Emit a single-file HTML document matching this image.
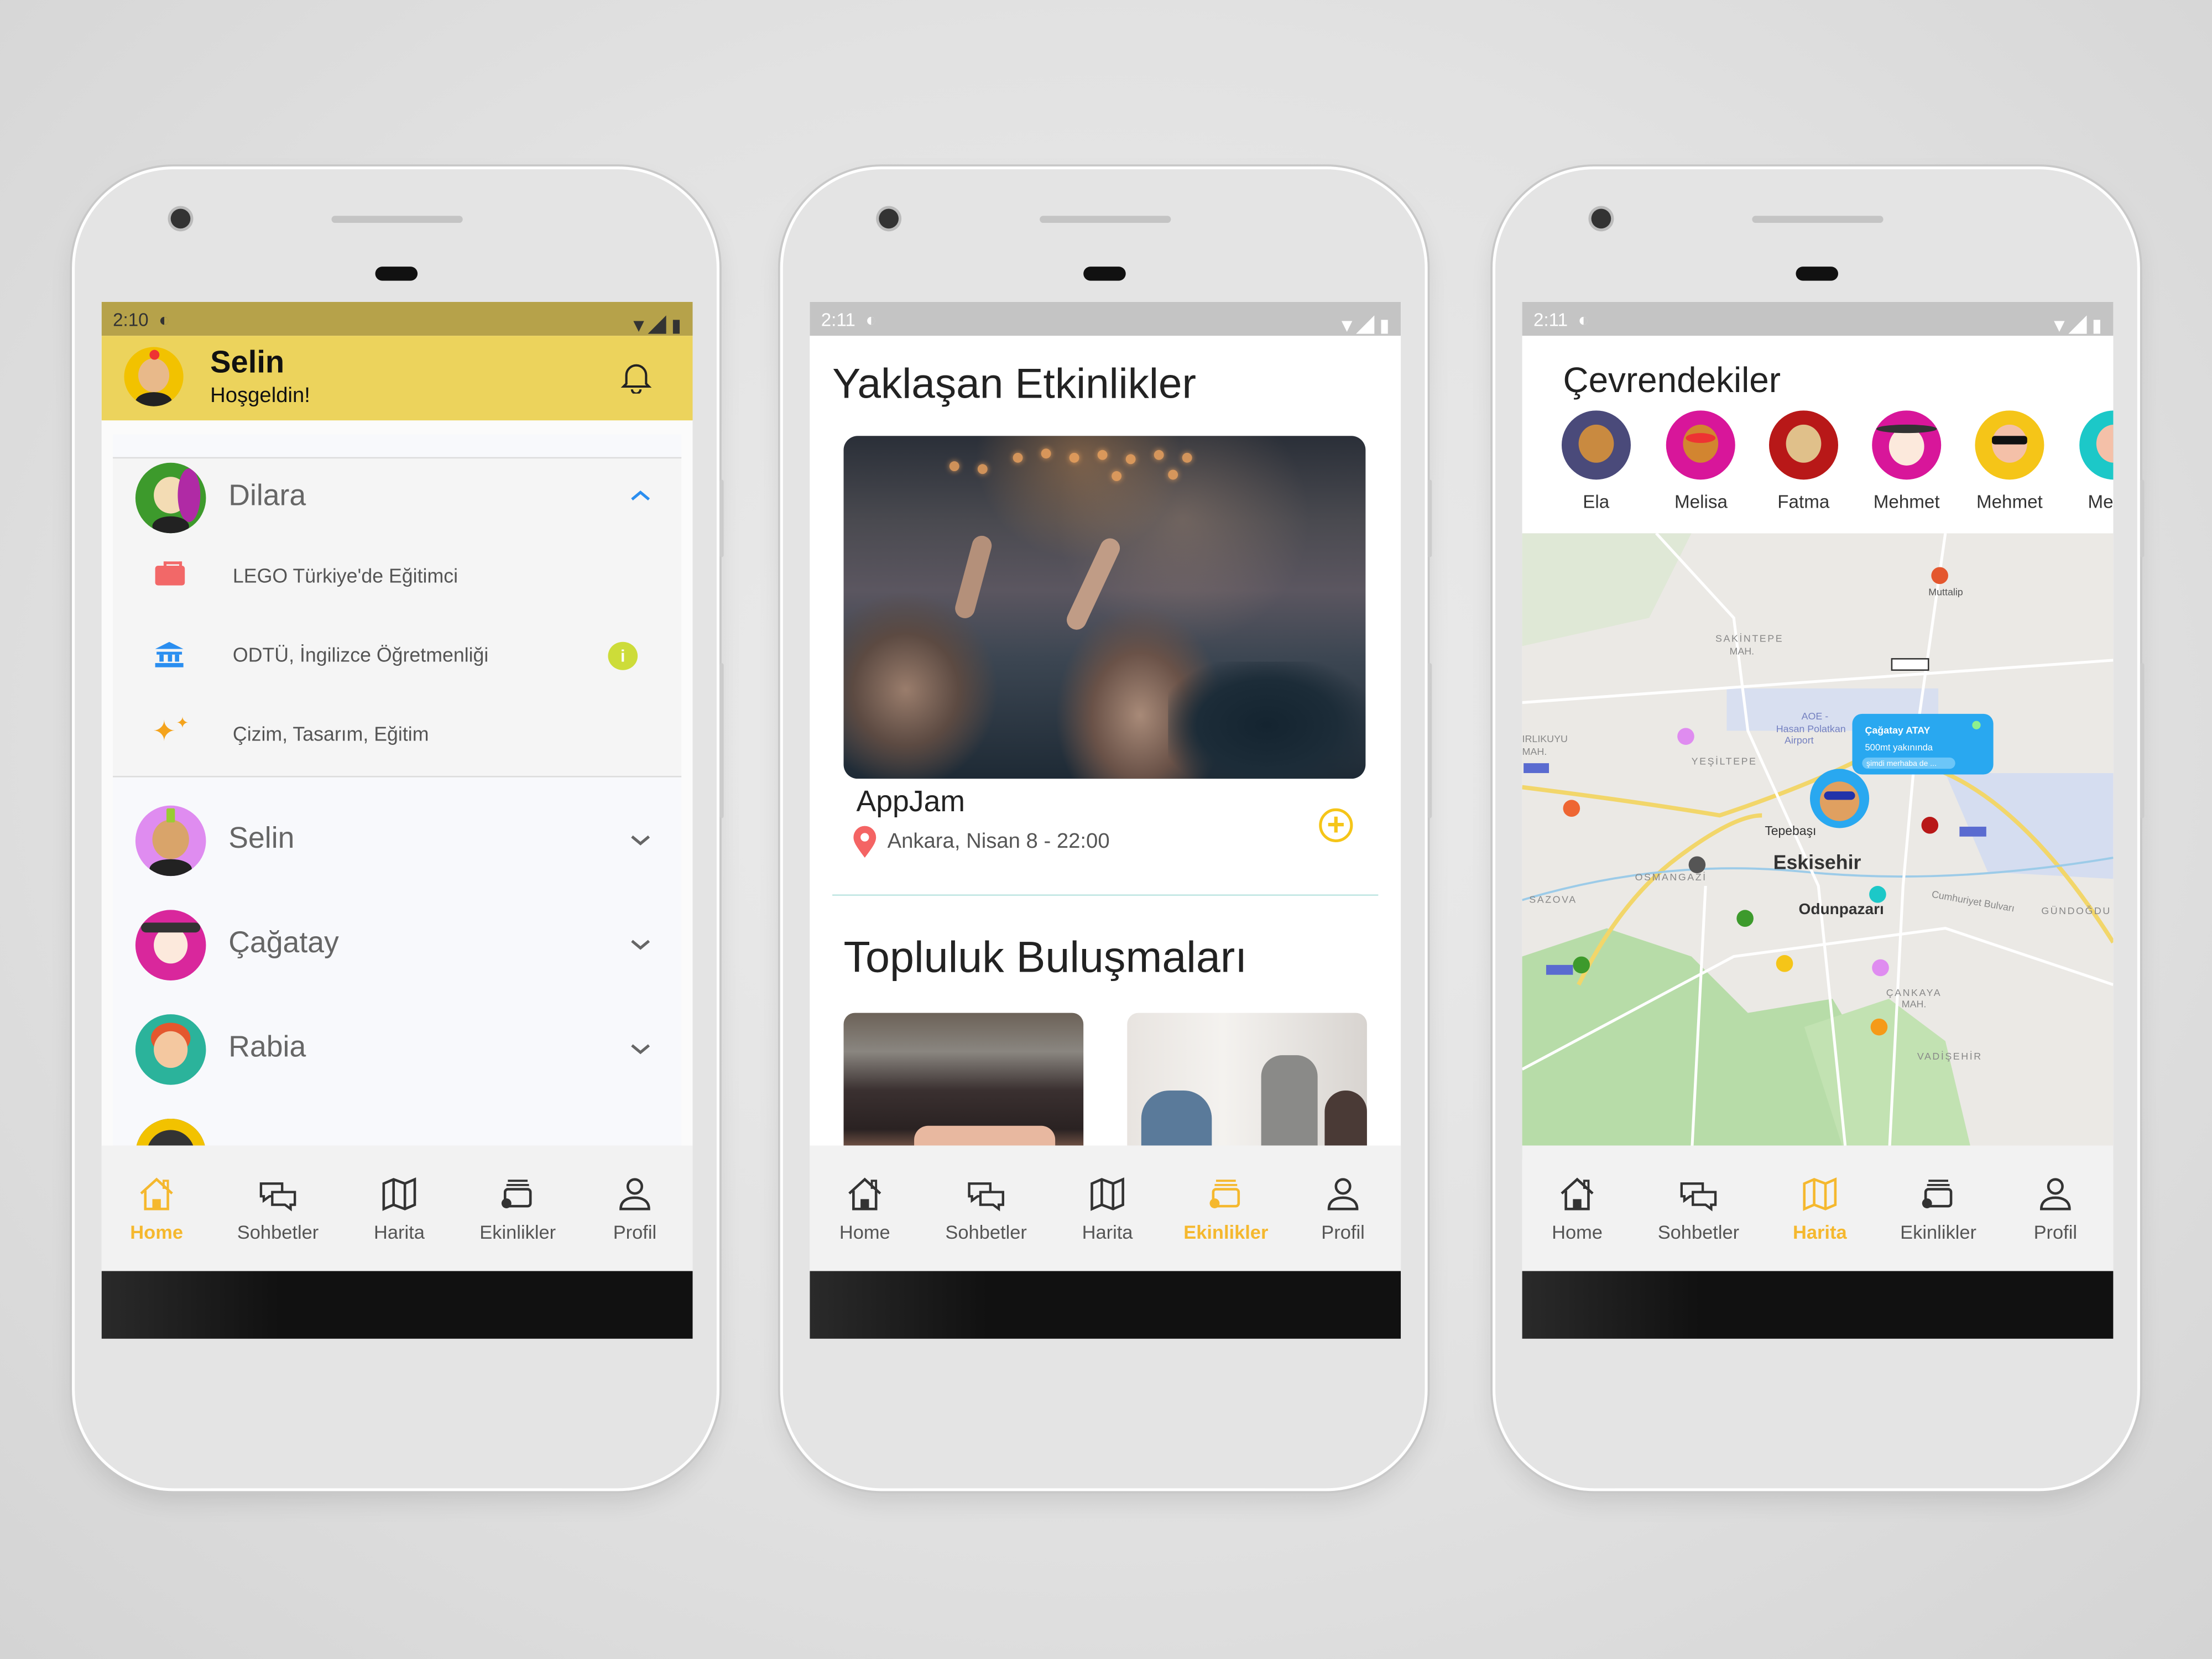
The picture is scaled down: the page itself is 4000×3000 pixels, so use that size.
<!DOCTYPE html>
<html><head><meta charset="utf-8">
<style>
html,body{margin:0;padding:0;width:4000px;height:3000px;overflow:hidden;}
body{background:radial-gradient(ellipse at 50% 45%,#ececec 0%,#e2e2e2 55%,#d4d4d4 100%);font-family:"Liberation Sans","Noto Sans CJK JP",sans-serif;}
#w{position:absolute;left:0;top:0;width:1568px;height:1176px;transform:scale(2.55102);transform-origin:0 0;}
.ph{position:absolute;top:120px;width:455px;height:935px;border-radius:70px;background:#e4e4e4;box-shadow:0 0 0 2px #fff,0 0 0 3.5px #c8c8c8,0 8px 18px rgba(0,0,0,.12);}
.ph .cam{position:absolute;left:68px;top:28px;width:14px;height:14px;border-radius:50%;background:#333;box-shadow:0 0 0 2px #bbb}
.ph .spk{position:absolute;left:182px;top:33px;width:93px;height:5px;border-radius:3px;background:#c4c4c4}
.ph .ear{position:absolute;left:213px;top:69px;width:30px;height:10px;border-radius:5px;background:#111}
.ph .btn{position:absolute;right:-5px;top:220px;width:3px;height:55px;background:#ccc;border-radius:2px}
.ph .btn2{position:absolute;right:-5px;top:350px;width:3px;height:110px;background:#ccc;border-radius:2px}
.scr{position:absolute;left:19px;top:94px;width:419px;height:735px;overflow:hidden;background:#fff}
.sb{position:absolute;left:0;top:0;width:100%;height:24px;color:#fff;font-size:13px;}
.sb .t{position:absolute;left:8px;top:5px}
.sb .r{position:absolute;right:8px;top:6px}
.nav{position:absolute;left:0;top:607px;width:100%;height:80px;background:#f2f2f2}
.nav div{position:absolute;top:0;width:84px;text-align:center;font-size:13.5px;color:#555}
.nav svg{display:block;margin:12px auto 7px;}
.bk{position:absolute;left:0;top:687px;width:100%;height:48px;background:linear-gradient(90deg,#2a2a2a,#111 30%,#111)}
.av{position:absolute;border-radius:50%;overflow:hidden}
.av i{position:absolute;border-radius:50%;background:#e8b98a}
.txt{position:absolute;white-space:nowrap}
.bo{position:absolute;width:7px;height:7px;border-radius:50%;background:#f5a860;opacity:.8;box-shadow:0 0 4px #f5a860}
</style></head><body><div id="w">

<!-- PHONE 1 -->
<div class="ph" style="left:53px">
<div class="cam"></div><div class="spk"></div><div class="ear"></div><div class="btn"></div><div class="btn2"></div>
<div class="scr" style="background:#fbfbfb">
 <div class="sb" style="background:#b6a24a;color:#333"><span class="t">2:10 &nbsp;◐</span><span class="r" style="color:#333">▼◢ ▮</span></div>
 <div style="position:absolute;top:24px;left:0;width:100%;height:60px;background:#ecd35c"></div>
 <div class="av" style="left:16px;top:32px;width:42px;height:42px;background:#f2c200"><i style="left:10px;top:8px;width:22px;height:24px"></i><i style="left:18px;top:2px;width:7px;height:7px;background:#e33"></i><i style="left:8px;top:32px;width:26px;height:14px;background:#222"></i></div>
 <div class="txt" style="left:77px;top:30px;font-size:22px;font-weight:bold;color:#111">Selin</div>
 <div class="txt" style="left:77px;top:58px;font-size:15px;color:#111">Hoşgeldin!</div>
 <svg style="position:absolute;left:368px;top:41px" width="22" height="24" viewBox="0 0 22 24"><path d="M4 17V11a7 7 0 0 1 14 0v6l2 2H2z M8 21a3 3 0 0 0 6 0" fill="none" stroke="#222" stroke-width="1.6"/></svg>
 <div style="position:absolute;left:8px;top:94px;width:403px;height:504px;background:#f8f9fc"></div>
 <div style="position:absolute;left:8px;top:110px;width:403px;height:225px;background:#f5f5f5;border-top:1px solid #ddd;border-bottom:1px solid #ddd"></div>
 <div class="av" style="left:24px;top:114px;width:50px;height:50px;background:#3d9a2c"><i style="left:13px;top:10px;width:24px;height:26px;background:#f3dcb4"></i><i style="left:30px;top:4px;width:16px;height:38px;background:#b02aa5"></i><i style="left:12px;top:38px;width:26px;height:14px;background:#222"></i></div>
 <div class="txt" style="left:90px;top:126px;font-size:21px;color:#666">Dilara</div>
 <svg style="position:absolute;left:375px;top:133px" width="14" height="9"><path d="M1 7L7 2L13 7" fill="none" stroke="#2a8ef0" stroke-width="2"/></svg>
 <div style="position:absolute;left:38px;top:187px;width:21px;height:14px;background:#f26868;border-radius:2px"></div><div style="position:absolute;left:44px;top:184px;width:9px;height:4px;border:2px solid #f26868;border-bottom:none"></div>
 <div class="txt" style="left:93px;top:186px;font-size:14px;color:#555">LEGO Türkiye'de Eğitimci</div>
 <svg style="position:absolute;left:37px;top:240px" width="22" height="20"><path d="M1 6L11 1L21 6Z" fill="#2a8ef0"/><rect x="2" y="8" width="18" height="2" fill="#2a8ef0"/><rect x="4" y="10" width="3" height="5" fill="#2a8ef0"/><rect x="10" y="10" width="3" height="5" fill="#2a8ef0"/><rect x="15" y="10" width="3" height="5" fill="#2a8ef0"/><rect x="1" y="16" width="20" height="3" fill="#2a8ef0"/></svg>
 <div class="txt" style="left:93px;top:242px;font-size:14px;color:#555">ODTÜ, İngilizce Öğretmenliği</div>
 <div style="position:absolute;left:359px;top:241px;width:21px;height:20px;border-radius:50%;background:#cddc39;color:#fff;font-size:12px;font-weight:bold;text-align:center;line-height:20px">i</div>
 <div class="txt" style="left:36px;top:292px;font-size:20px;color:#f4a31c">✦<span style="font-size:11px;vertical-align:top">✦</span></div>
 <div class="txt" style="left:93px;top:298px;font-size:14px;color:#555">Çizim, Tasarım, Eğitim</div>
 <div class="av" style="left:24px;top:357px;width:50px;height:50px;background:#df8cf0"><i style="left:12px;top:10px;width:26px;height:28px;background:#d9a46a"></i><i style="left:22px;top:2px;width:6px;height:10px;background:#9c3;border-radius:1px"></i><i style="left:10px;top:38px;width:30px;height:14px;background:#222"></i></div>
 <div class="txt" style="left:90px;top:369px;font-size:21px;color:#666">Selin</div>
 <div class="av" style="left:24px;top:431px;width:50px;height:50px;background:#d9279c"><i style="left:13px;top:12px;width:24px;height:26px;background:#fce9dc"></i><i style="left:4px;top:9px;width:42px;height:7px;background:#333;border-radius:4px"></i></div>
 <div class="txt" style="left:90px;top:443px;font-size:21px;color:#666">Çağatay</div>
 <div class="av" style="left:24px;top:505px;width:50px;height:50px;background:#2bb39b"><i style="left:11px;top:6px;width:28px;height:22px;background:#e4572e"></i><i style="left:13px;top:12px;width:24px;height:26px;background:#f4c8a0"></i></div>
 <div class="txt" style="left:90px;top:517px;font-size:21px;color:#666">Rabia</div>
 <svg style="position:absolute;left:375px;top:377px" width="14" height="9"><path d="M1 2L7 7L13 2" fill="none" stroke="#666" stroke-width="2"/></svg>
 <svg style="position:absolute;left:375px;top:451px" width="14" height="9"><path d="M1 2L7 7L13 2" fill="none" stroke="#666" stroke-width="2"/></svg>
 <svg style="position:absolute;left:375px;top:525px" width="14" height="9"><path d="M1 2L7 7L13 2" fill="none" stroke="#666" stroke-width="2"/></svg>
 <div style="position:absolute;left:24px;top:579px;width:50px;height:20px;overflow:hidden"><div style="width:50px;height:50px;border-radius:50%;box-shadow:inset 0 0 0 8px #f2c200;background:#333"></div></div>
 <div style="position:absolute;left:0;top:598px;width:100%;height:10px;background:#f2f2f2"></div>
 <div class="nav" id="n1"></div>
 <div class="bk"></div>
</div></div>

<!-- PHONE 2 -->
<div class="ph" style="left:555px">
<div class="cam"></div><div class="spk"></div><div class="ear"></div><div class="btn"></div><div class="btn2"></div>
<div class="scr">
 <div class="sb" style="background:#c4c4c4"><span class="t">2:11 &nbsp;◐</span><span class="r">▼◢ ▮</span></div>
 <div class="txt" style="left:16px;top:42px;font-size:30px;color:#222">Yaklaşan Etkinlikler</div>
 <div style="position:absolute;left:24px;top:95px;width:370px;height:243px;border-radius:10px;overflow:hidden;background:linear-gradient(180deg,#2a2f38 0%,#4a4a50 25%,#5b5660 45%,#3c4652 65%,#1e2a35 100%)">
  <div style="position:absolute;left:0;top:0;width:100%;height:60%;background:radial-gradient(circle at 45% 10%,rgba(255,170,90,.35) 0,transparent 30%),radial-gradient(circle at 65% 40%,rgba(200,160,130,.3) 0,transparent 35%)"></div>
  <div class="bo" style="left:120px;top:12px"></div><div class="bo" style="left:140px;top:9px"></div><div class="bo" style="left:160px;top:12px"></div><div class="bo" style="left:180px;top:10px"></div><div class="bo" style="left:200px;top:13px"></div><div class="bo" style="left:220px;top:10px"></div><div class="bo" style="left:240px;top:12px"></div><div class="bo" style="left:75px;top:18px"></div><div class="bo" style="left:95px;top:20px"></div><div class="bo" style="left:190px;top:25px"></div><div class="bo" style="left:230px;top:24px"></div>
  <div style="position:absolute;left:0;top:110px;width:110px;height:140px;background:radial-gradient(ellipse at 40% 50%,#9a7d6c 0,#5c4a42 40%,transparent 70%)"></div>
  <div style="position:absolute;left:150px;top:120px;width:120px;height:130px;background:radial-gradient(ellipse at 50% 60%,#a88a78 0,#6a5248 40%,transparent 70%)"></div>
  <div style="position:absolute;left:85px;top:70px;width:14px;height:60px;background:#b4907a;border-radius:7px;transform:rotate(15deg)"></div>
  <div style="position:absolute;left:170px;top:70px;width:14px;height:70px;background:#c09c86;border-radius:7px;transform:rotate(25deg)"></div>
  <div style="position:absolute;left:230px;top:160px;width:140px;height:90px;background:radial-gradient(ellipse,#142430 0,#1c2c38 50%,transparent 80%)"></div>
 </div>
 <div class="txt" style="left:33px;top:343px;font-size:21px;color:#222">AppJam</div>
 <svg style="position:absolute;left:30px;top:371px" width="18" height="24"><path d="M9 23C3 15 1 12 1 8.5A8 8 0 0 1 17 8.5C17 12 15 15 9 23Z" fill="#f46464"/><circle cx="9" cy="8.5" r="3" fill="#fff"/></svg>
 <div class="txt" style="left:55px;top:374px;font-size:15px;color:#555">Ankara, Nisan 8 - 22:00</div>
 <div style="position:absolute;left:361px;top:359px;width:20px;height:20px;border:2.5px solid #f5c518;border-radius:50%;color:#f5c518;font-size:22px;line-height:19px;text-align:center;font-weight:bold">+</div>
 <div style="position:absolute;left:16px;top:420px;width:387px;height:1px;background:#bfe6e2"></div>
 <div class="txt" style="left:24px;top:447px;font-size:31px;color:#222">Topluluk Buluşmaları</div>
 <div style="position:absolute;left:24px;top:504px;width:170px;height:110px;border-radius:8px;overflow:hidden;background:linear-gradient(180deg,#6c6258 0%,#8a8680 25%,#3a3030 50%,#2a2222 75%,#c58a6e 100%)"><div style="position:absolute;left:50px;top:80px;width:100px;height:30px;background:#e8b8a0;border-radius:10px"></div></div>
 <div style="position:absolute;left:225px;top:504px;width:170px;height:110px;border-radius:8px;overflow:hidden;background:linear-gradient(90deg,#e8e4e0 0%,#f4f2ef 40%,#d8d4d0 100%)"><div style="position:absolute;left:10px;top:55px;width:50px;height:55px;background:#5a7a9a;border-radius:20px 20px 0 0"></div><div style="position:absolute;left:95px;top:30px;width:40px;height:80px;background:#8a8a88;border-radius:15px 15px 0 0"></div><div style="position:absolute;left:140px;top:55px;width:30px;height:55px;background:#4a3a36;border-radius:15px 15px 0 0"></div></div>
 <div style="position:absolute;left:0;top:598px;width:100%;height:10px;background:#f2f2f2"></div>
 <div class="nav" id="n2"></div>
 <div class="bk"></div>
</div></div>

<!-- PHONE 3 -->
<div class="ph" style="left:1060px">
<div class="cam"></div><div class="spk"></div><div class="ear"></div><div class="btn"></div><div class="btn2"></div>
<div class="scr">
 <div class="sb" style="background:#c4c4c4"><span class="t">2:11 &nbsp;◐</span><span class="r">▼◢ ▮</span></div>
 <div class="txt" style="left:29px;top:42px;font-size:25px;color:#222">Çevrendekiler</div>
 <div class="av" style="left:28px;top:77px;width:49px;height:49px;background:#4a4a7a"><i style="left:12px;top:10px;width:25px;height:27px;background:#c98a40"></i></div>
 <div class="av" style="left:102px;top:77px;width:49px;height:49px;background:#d8169a"><i style="left:12px;top:10px;width:25px;height:27px;background:#d28530"></i><i style="left:14px;top:16px;width:21px;height:7px;background:#e33"></i></div>
 <div class="av" style="left:175px;top:77px;width:49px;height:49px;background:#b81818"><i style="left:12px;top:10px;width:25px;height:27px;background:#e0c08a"></i></div>
 <div class="av" style="left:248px;top:77px;width:49px;height:49px;background:#d8169a"><i style="left:12px;top:12px;width:25px;height:27px;background:#fce9dc"></i><i style="left:3px;top:10px;width:43px;height:6px;background:#333"></i></div>
 <div class="av" style="left:321px;top:77px;width:49px;height:49px;background:#f5c518"><i style="left:12px;top:10px;width:25px;height:27px;background:#f4c0a8"></i><i style="left:12px;top:18px;width:25px;height:6px;background:#111;border-radius:2px"></i></div>
 <div class="av" style="left:395px;top:77px;width:49px;height:49px;background:#1cc8c8"><i style="left:12px;top:10px;width:25px;height:27px;background:#f4c0a8"></i></div>
 <div class="txt" style="left:43px;top:134px;font-size:13px;color:#333">Ela</div>
 <div class="txt" style="left:108px;top:134px;font-size:13px;color:#333">Melisa</div>
 <div class="txt" style="left:181px;top:134px;font-size:13px;color:#333">Fatma</div>
 <div class="txt" style="left:249px;top:134px;font-size:13px;color:#333">Mehmet</div>
 <div class="txt" style="left:322px;top:134px;font-size:13px;color:#333">Mehmet</div>
 <div class="txt" style="left:401px;top:134px;font-size:13px;color:#333">Me</div>
 <svg style="position:absolute;left:0;top:164px" width="419" height="444" viewBox="0 0 419 444">
  <rect width="419" height="444" fill="#ebe9e5"/>
  <path d="M0 300 L60 280 L120 300 L160 340 L220 330 L250 380 L240 444 L0 444Z" fill="#b7dca8"/>
  <path d="M200 350 L260 330 L300 360 L320 444 L230 444Z" fill="#c2e2b2"/>
  <path d="M0 0 L120 0 L90 60 L0 80Z" fill="#dfe8d6"/>
  <rect x="145" y="110" width="150" height="30" fill="#d8dff0"/>
  <path d="M300 170 L419 170 L419 245 L330 240Z" fill="#d5ddf0"/>
  <path d="M0 180 Q80 190 140 200 Q200 180 240 160 Q330 150 419 290" fill="none" stroke="#f2d66a" stroke-width="3"/>
  <path d="M40 320 Q70 260 110 230 Q150 200 170 200" fill="none" stroke="#f2d66a" stroke-width="3"/>
  <path d="M0 260 Q100 230 200 240 Q300 250 419 230" fill="none" stroke="#9ccbe8" stroke-width="1.5"/>
  <g stroke="#fff" stroke-width="2" fill="none"><path d="M95 0 L150 60 L160 140 L210 250 L230 444"/><path d="M0 120 L419 90"/><path d="M0 380 L150 300 L300 280 L419 320"/><path d="M300 0 L280 140 L270 250 L260 444"/><path d="M130 250 L120 444"/></g>
  <g font-family="Liberation Sans" fill="#888" font-size="7"><text x="137" y="77" letter-spacing="1">SAKİNTEPE</text><text x="147" y="86">MAH.</text><text x="120" y="164" letter-spacing="1">YEŞİLTEPE</text><text x="5" y="262" letter-spacing="1">SAZOVA</text><text x="80" y="246" letter-spacing="1">OSMANGAZİ</text><text x="258" y="328" letter-spacing="1">ÇANKAYA</text><text x="269" y="336">MAH.</text><text x="280" y="373" letter-spacing="1">VADİŞEHİR</text><text x="368" y="270" letter-spacing="1">GÜNDOĞDU</text><text x="0" y="148">IRLIKUYU</text><text x="0" y="157">MAH.</text><text x="290" y="258" transform="rotate(10 290 258)">Cumhuriyet Bulvarı</text><text x="288" y="44" fill="#555">Muttalip</text></g>
  <g font-family="Liberation Sans" fill="#7480c0" font-size="7"><text x="198" y="132">AOE -</text><text x="180" y="141">Hasan Polatkan</text><text x="186" y="149">Airport</text></g>
  <text x="172" y="214" font-family="Liberation Sans" font-size="9" fill="#333">Tepebaşı</text>
  <text x="178" y="238" font-family="Liberation Sans" font-size="14" font-weight="bold" fill="#333">Eskisehir</text>
  <text x="196" y="270" font-family="Liberation Sans" font-size="11" font-weight="bold" fill="#333">Odunpazarı</text>
  <rect x="1" y="163" width="18" height="7" fill="#5a6bd0"/><rect x="310" y="208" width="19" height="7" fill="#5a6bd0"/><rect x="17" y="306" width="19" height="7" fill="#5a6bd0"/>
  <rect x="262" y="89" width="26" height="8" fill="#fff" stroke="#333"/>
  <g><circle cx="296" cy="30" r="6" fill="#e4572e"/><circle cx="116" cy="144" r="6" fill="#df8cf0"/><circle cx="35" cy="195" r="6" fill="#e63"/><circle cx="289" cy="207" r="6" fill="#b81818"/><circle cx="124" cy="235" r="6" fill="#555"/><circle cx="252" cy="256" r="6" fill="#1cc8c8"/><circle cx="158" cy="273" r="6" fill="#3d9a2c"/><circle cx="42" cy="306" r="6" fill="#3d9a2c"/><circle cx="186" cy="305" r="6" fill="#f5c518"/><circle cx="254" cy="308" r="6" fill="#df8cf0"/><circle cx="253" cy="350" r="6" fill="#f59a18"/></g>
  <circle cx="225" cy="188" r="21" fill="#29a8f0"/><circle cx="225" cy="190" r="14" fill="#e0a060"/><rect x="214" y="183" width="22" height="6" rx="3" fill="#2233aa"/>
  <rect x="234" y="128" width="100" height="43" rx="7" fill="#29a8f0"/>
  <text x="243" y="142" font-family="Liberation Sans" font-size="7" font-weight="bold" fill="#fff">Çağatay ATAY</text>
  <text x="243" y="154" font-family="Liberation Sans" font-size="6.5" fill="#fff">500mt yakınında</text>
  <rect x="241" y="159" width="66" height="8" rx="4" fill="#6cc6f8"/><text x="244" y="165" font-family="Liberation Sans" font-size="5.5" fill="#fff">şimdi merhaba de ...</text>
  <circle cx="322" cy="136" r="3" fill="#8ef08e"/>
 </svg>
 <div style="position:absolute;left:0;top:598px;width:100%;height:10px;background:#f2f2f2"></div>
 <div class="nav" id="n3"></div>
 <div class="bk"></div>
</div></div>
</div>

<script>
var I={
home:'<path d="M3 13L14 3L25 13M6 11V24H22V11" fill="none" stroke="C" stroke-width="1.8"/><rect x="11" y="17" width="6" height="7" fill="C"/><rect x="19" y="4" width="3" height="5" fill="none" stroke="C" stroke-width="1.5"/>',
chat:'<path d="M2 6h15v9H8l-4 3v-3H2z" fill="none" stroke="C" stroke-width="1.7"/><path d="M10 12h16v9h-3v3l-4-3h-9z" fill="#f2f2f2" stroke="C" stroke-width="1.7"/>',
map:'<path d="M3 6l7-3 8 3 7-3v18l-7 3-8-3-7 3z M10 3v18 M18 6v18" fill="none" stroke="C" stroke-width="1.8"/>',
ev:'<path d="M7 4h14 M6 7h16" stroke="C" stroke-width="1.5"/><rect x="5" y="10" width="18" height="12" rx="2" fill="none" stroke="C" stroke-width="1.8"/><circle cx="6" cy="20" r="3.5" fill="C"/>',
pr:'<circle cx="14" cy="8" r="5" fill="none" stroke="C" stroke-width="1.8"/><path d="M4 24c0-6 5-8 10-8s10 2 10 8z" fill="none" stroke="C" stroke-width="1.8"/>'};
var L=[['home','Home',39],['chat','Sohbetler',125],['map','Harita',211],['ev','Ekinlikler',295],['pr','Profil',378]];
function nav(id,a){var h='';L.forEach(function(x,i){var c=i==a?'#f5b82e':'#333';var t=i==a?'#f5b82e':'#555';h+='<div style="left:'+(x[2]-42)+'px;color:'+t+(i==a?';font-weight:bold':'')+'"><svg width="28" height="26" viewBox="0 0 28 26">'+I[x[0]].replace(/C/g,c)+'</svg>'+x[1]+'</div>'});document.getElementById(id).innerHTML=h;}
nav('n1',0);nav('n2',3);nav('n3',2);
</script>
</body></html>
